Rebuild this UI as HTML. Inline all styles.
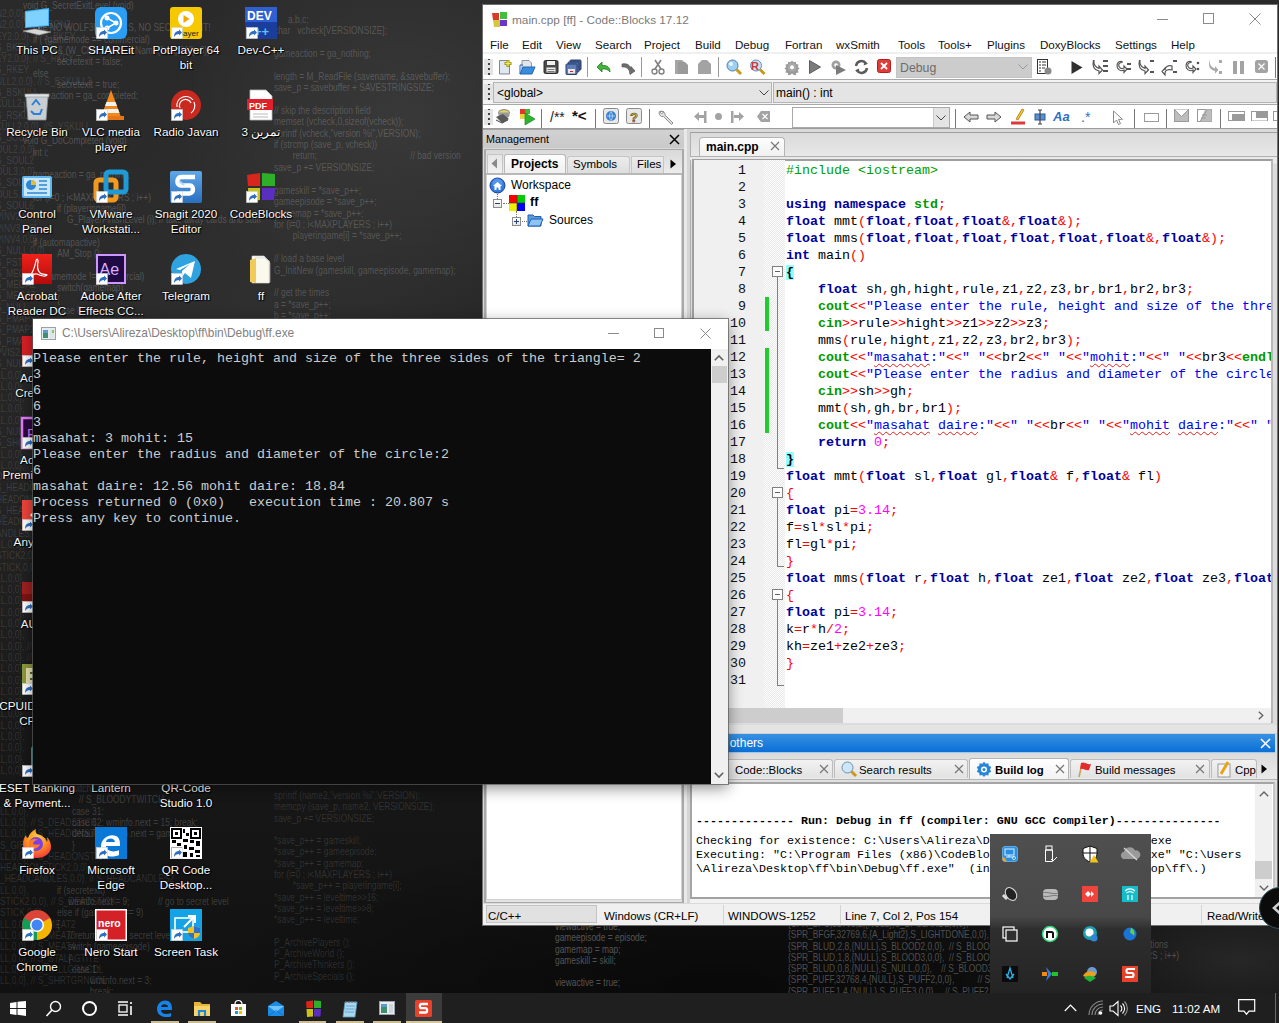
<!DOCTYPE html>
<html><head><meta charset="utf-8">
<style>
*{margin:0;padding:0;box-sizing:border-box}
html,body{width:1279px;height:1023px;overflow:hidden}
body{position:relative;background:#1c1c1c;font-family:"Liberation Sans",sans-serif;font-size:12px}
.a{position:absolute;white-space:nowrap}
svg{overflow:visible}
pre.a{white-space:pre}
#desk{left:0;top:0;width:1279px;height:993px;overflow:hidden;background:radial-gradient(ellipse 190px 80px at 1240px 960px,rgba(42,42,42,.85) 0%,rgba(42,42,42,0) 100%),radial-gradient(ellipse 520px 160px at 720px 990px,rgba(0,0,0,.5) 0%,rgba(0,0,0,0) 100%),radial-gradient(ellipse 230px 200px at 400px 120px,rgba(62,62,62,.75) 0%,rgba(62,62,62,0) 100%),radial-gradient(ellipse 260px 240px at 260px 300px,rgba(52,52,52,.6) 0%,rgba(52,52,52,0) 100%),linear-gradient(180deg,#2a2a2a 0%,#282828 30%,#222 55%,#181818 75%,#111 100%)}
#cb{left:483px;top:5px;width:794px;height:920px;background:#fff;overflow:hidden;box-shadow:0 0 0 1px #6f6f6f}
.wt{font-family:"Liberation Sans",sans-serif;transform:scaleX(.8);transform-origin:0 0}
.dl{width:90px;text-align:center;font-size:11.7px;line-height:15px;color:#fff;text-shadow:0 0 2px #000,1px 1px 1px #000,0 0 1px #000}
.tt{font-size:11.8px;line-height:16px;color:#7a7a7a}
.mn{top:32px;font-size:11.6px;line-height:15px;color:#111}
.grip{width:9px;background:#e3e3e3 linear-gradient(#555,#555) 3px 4px/2px 2px repeat-y;background-image:repeating-linear-gradient(180deg,transparent 0 2px,#444 2px 4px,transparent 4px 5px);background-size:2px 100%;background-position:4px 0;background-repeat:no-repeat;background-clip:content-box;padding:3px 0}
.hatch{background:repeating-conic-gradient(#e9e9e9 0 25%,#fdfdfd 0 50%) 0 0/2px 2px}
.ln{font-family:"Liberation Mono",monospace;font-size:13.33px;line-height:17px;text-align:right;color:#111}
.code{font-family:"Liberation Mono",monospace;font-size:13.33px;line-height:17px;color:#000}
.kw{color:#0000a0;font-weight:bold}.k2{color:#009a00;font-weight:bold}.op{color:#f00}.st{color:#0000f0}.nu{color:#f0f}.pp{color:#00a000}.br{background:#8fffff;color:#000;font-weight:bold}
.code u{text-decoration:underline wavy #e02020;text-decoration-thickness:.7px;text-underline-offset:2px}
.fb{width:11px;height:11px;border:1px solid #808080;background:#fff linear-gradient(#606060,#606060) center/5px 1px no-repeat}
.tab2{top:756px;height:19px;background:linear-gradient(#f2f2f2,#e2e2e2);border:1px solid #bdbdbd;border-bottom:none;border-radius:3px 3px 0 0}
.t2t{top:757px;font-size:11.4px;line-height:16px;color:#000}
.log{font-family:"Liberation Mono",monospace;font-size:11.67px;line-height:14px;color:#000}
.sb{top:904px;font-size:11.5px;line-height:15px;color:#000}
.cn{font-family:"Liberation Mono",monospace;font-size:13.33px;line-height:16px;color:#cccccc}
#con{left:33px;top:319px;width:695px;height:465px;background:#0c0c0c;overflow:hidden;box-shadow:0 0 0 1px rgba(90,90,90,.7),0 4px 14px rgba(0,0,0,.45)}
#taskbar{left:0;top:993px;width:1279px;height:30px;background:#1f1f1f}
#tray{left:990px;top:834px;width:161px;height:159px;background:linear-gradient(180deg,#4f4f4f 0%,#484848 52%,#2e2e2e 60%,#242424 100%)}
</style></head><body>
<div id="desk" class="a"></div>
<div class="a wt" style="left:23px;top:-1.3px;line-height:12px;color:rgba(255,255,255,0.2);font-size:10.5px">void G_SecretExitLevel (void)</div>
<div class="a wt" style="left:23px;top:10.0px;line-height:12px;color:rgba(255,255,255,0.2);font-size:10.5px">{</div>
<div class="a wt" style="left:33px;top:21.3px;line-height:12px;color:rgba(255,255,255,0.2);font-size:10.5px">// IF NO WOLF3D LEVELS, NO SECRET EXIT!</div>
<div class="a wt" style="left:33px;top:32.6px;line-height:12px;color:rgba(255,255,255,0.2);font-size:10.5px">if ( (gamemode == commercial)</div>
<div class="a wt" style="left:52px;top:43.9px;line-height:12px;color:rgba(255,255,255,0.2);font-size:10.5px">&amp;&amp; (W_CheckNumForName(&quot;map31&quot;)&lt;0))</div>
<div class="a wt" style="left:57px;top:55.2px;line-height:12px;color:rgba(255,255,255,0.2);font-size:10.5px">secretexit = false;</div>
<div class="a wt" style="left:33px;top:66.5px;line-height:12px;color:rgba(255,255,255,0.2);font-size:10.5px">else</div>
<div class="a wt" style="left:57px;top:77.8px;line-height:12px;color:rgba(255,255,255,0.2);font-size:10.5px">secretexit = true;</div>
<div class="a wt" style="left:30px;top:89.1px;line-height:12px;color:rgba(255,255,255,0.2);font-size:10.5px">gameaction = ga_completed;</div>
<div class="a wt" style="left:23px;top:100.4px;line-height:12px;color:rgba(255,255,255,0.2);font-size:10.5px">}</div>
<div class="a wt" style="left:23px;top:134.3px;line-height:12px;color:rgba(255,255,255,0.2);font-size:10.5px">void G_DoCompleted (void)</div>
<div class="a wt" style="left:33px;top:145.6px;line-height:12px;color:rgba(255,255,255,0.2);font-size:10.5px">int             i;</div>
<div class="a wt" style="left:33px;top:168.2px;line-height:12px;color:rgba(255,255,255,0.2);font-size:10.5px">gameaction = ga_nothing;</div>
<div class="a wt" style="left:33px;top:190.8px;line-height:12px;color:rgba(255,255,255,0.2);font-size:10.5px">for (i=0 ; i&lt;MAXPLAYERS ; i++)</div>
<div class="a wt" style="left:57px;top:202.1px;line-height:12px;color:rgba(255,255,255,0.2);font-size:10.5px">if (playeringame[i])</div>
<div class="a wt" style="left:67px;top:213.4px;line-height:12px;color:rgba(255,255,255,0.2);font-size:10.5px">G_PlayerFinishLevel (i);        // take away cards and stuff</div>
<div class="a wt" style="left:33px;top:236.0px;line-height:12px;color:rgba(255,255,255,0.2);font-size:10.5px">if (automapactive)</div>
<div class="a wt" style="left:57px;top:247.3px;line-height:12px;color:rgba(255,255,255,0.2);font-size:10.5px">AM_Stop ();</div>
<div class="a wt" style="left:33px;top:269.9px;line-height:12px;color:rgba(255,255,255,0.2);font-size:10.5px">if ( gamemode != commercial)</div>
<div class="a wt" style="left:57px;top:281.2px;line-height:12px;color:rgba(255,255,255,0.2);font-size:10.5px">switch(gamemap)</div>
<div class="a wt" style="left:57px;top:292.5px;line-height:12px;color:rgba(255,255,255,0.2);font-size:10.5px">{</div>
<div class="a wt" style="left:57px;top:303.8px;line-height:12px;color:rgba(255,255,255,0.2);font-size:10.5px">case 8:</div>
<pre class="a wt" style="left:-4px;top:8px;line-height:11.3px;color:rgba(255,255,255,0.13);font-size:10.5px">N2,0,0},
N2,0,0},  // S_BON2
EY2,0,0},  // S_BKEY
S_BKEY
EY2,0,0}, // S_RKEY
S_RKEY
ULL2,0,0}, // S_BSKULL2
S_BSKULL
KULL2,0,0},
S_RSKULL
KULL2,0,0}, //S_YSKULL
S_SOUL
OUL2,0,0},
S_SOUL2
OUL3,0,0},
S_SOUL4
OUL5,0,0},
S_SOUL6
PINV2,0,0},
PINV3,0,0},
PINV4,0,0},
S_NULL,0,0},
S_PSTR
S_MEGA
S_MEGA2
S_MEGA3
S_NULL
S_PMAP
S_PMAP2
S_PMAP3
PVIS2,0,0},
S_NULL,0,0},
LL,0,0},
LL,0,0},
LL,0,0},
LL,0,0},
LL,0,0},
S_NULL,0,0},
S_SHOT
LL,0,0},
LL,0,0},
OOD,0,0},
S_HEADONSTICK
HEADONSTICK
S_HEADCANDLES
HEADCANDLES2,0,0},
ANDLES,0,0},
LL,0,0},
STICK2,0,0},
STICK,0,0},
LL,0,0},
LL,0,0},
LL,0,0},
LL,0,0},
LL,0,0},
LL,0,0},
LL,0,0}, // S_TALLGRNCOL
LL,0,0}, // S_SHRTGRNCOL
LL,0,0},
LL,0,0},
LL,0,0},
LL,0,0},
LL,0,0},
LL,0,0},
LL,0,0},
LL,0,0},
LL,0,0},
LL,0,0},</pre>
<pre class="a wt" style="left:274px;top:13.6px;line-height:11.4px;color:rgba(255,255,255,0.19);font-size:10.5px">      a,b,c;
char   vcheck[VERSIONSIZE];

gameaction = ga_nothing;

length = M_ReadFile (savename, &amp;savebuffer);
save_p = savebuffer + SAVESTRINGSIZE;

// skip the description field
memset (vcheck,0,sizeof(vcheck));
sprintf (vcheck,&quot;version %i&quot;,VERSION);
if (strcmp (save_p, vcheck))
        return;                                        // bad version
save_p += VERSIONSIZE;

gameskill = *save_p++;
gameepisode = *save_p++;
gamemap = *save_p++;
for (i=0 ; i&lt;MAXPLAYERS ; i++)
        playeringame[i] = *save_p++;

// load a base level
G_InitNew (gameskill, gameepisode, gamemap);

// get the times
a = *save_p++;
b = *save_p++;</pre>
<div class="a wt" style="left:72px;top:782.0px;line-height:12px;color:rgba(255,255,255,0.18);font-size:10.5px">witch</div>
<div class="a wt" style="left:79px;top:793.3px;line-height:12px;color:rgba(255,255,255,0.18);font-size:10.5px">// S_BLOODYTWITCH</div>
<div class="a wt" style="left:72px;top:804.6px;line-height:12px;color:rgba(255,255,255,0.18);font-size:10.5px">case 31:</div>
<div class="a wt" style="left:72px;top:815.9px;line-height:12px;color:rgba(255,255,255,0.18);font-size:10.5px">case 32: wminfo.next = 15; break;</div>
<div class="a wt" style="left:72px;top:827.2px;line-height:12px;color:rgba(255,255,255,0.18);font-size:10.5px">default: wminfo.next = gamemap;</div>
<div class="a wt" style="left:72px;top:838.5px;line-height:12px;color:rgba(255,255,255,0.18);font-size:10.5px">}</div>
<div class="a wt" style="left:57px;top:883.7px;line-height:12px;color:rgba(255,255,255,0.18);font-size:10.5px">if (secretexit)</div>
<div class="a wt" style="left:68px;top:895.0px;line-height:12px;color:rgba(255,255,255,0.18);font-size:10.5px">wminfo.next = 9;</div>
<div class="a wt" style="left:158px;top:895.0px;line-height:12px;color:rgba(255,255,255,0.18);font-size:10.5px">// go to secret level</div>
<div class="a wt" style="left:57px;top:906.3px;line-height:12px;color:rgba(255,255,255,0.18);font-size:10.5px">else if (gamemap == 9)</div>
<div class="a wt" style="left:57px;top:917.6px;line-height:12px;color:rgba(255,255,255,0.18);font-size:10.5px">{</div>
<div class="a wt" style="left:68px;top:928.9px;line-height:12px;color:rgba(255,255,255,0.18);font-size:10.5px">// returning from secret level</div>
<div class="a wt" style="left:68px;top:940.2px;line-height:12px;color:rgba(255,255,255,0.18);font-size:10.5px">switch (gameepisode)</div>
<div class="a wt" style="left:68px;top:951.5px;line-height:12px;color:rgba(255,255,255,0.18);font-size:10.5px">{</div>
<div class="a wt" style="left:72px;top:962.8px;line-height:12px;color:rgba(255,255,255,0.18);font-size:10.5px">case 1:</div>
<div class="a wt" style="left:90px;top:974.1px;line-height:12px;color:rgba(255,255,255,0.18);font-size:10.5px">wminfo.next = 3;</div>
<div class="a wt" style="left:90px;top:985.4px;line-height:12px;color:rgba(255,255,255,0.18);font-size:10.5px">break;</div>
<div class="a wt" style="left:0px;top:804.6px;line-height:12px;color:rgba(255,255,255,0.12);font-size:10.5px">LL,0,0},</div>
<div class="a wt" style="left:0px;top:815.9px;line-height:12px;color:rgba(255,255,255,0.12);font-size:10.5px">LL,0,0},    // S_DEADSTICK</div>
<div class="a wt" style="left:0px;top:827.2px;line-height:12px;color:rgba(255,255,255,0.12);font-size:10.5px">LL,0,0},    // S_HEADONSTICK</div>
<div class="a wt" style="left:0px;top:838.5px;line-height:12px;color:rgba(255,255,255,0.12);font-size:10.5px">S_GIBS</div>
<div class="a wt" style="left:0px;top:849.8px;line-height:12px;color:rgba(255,255,255,0.12);font-size:10.5px">LL,0,0},     // S_HEADONSTICK</div>
<div class="a wt" style="left:0px;top:861.1px;line-height:12px;color:rgba(255,255,255,0.12);font-size:10.5px">HEADSONSTICK2,0,0},</div>
<div class="a wt" style="left:0px;top:872.4px;line-height:12px;color:rgba(255,255,255,0.12);font-size:10.5px">_HEADCANDLES,0,0},      // S_HEADCANDLES2</div>
<div class="a wt" style="left:0px;top:883.7px;line-height:12px;color:rgba(255,255,255,0.12);font-size:10.5px">LL,0,0},</div>
<div class="a wt" style="left:0px;top:895.0px;line-height:12px;color:rgba(255,255,255,0.12);font-size:10.5px">STICK2,0,0},  // S_DEADSTICK</div>
<div class="a wt" style="left:0px;top:906.3px;line-height:12px;color:rgba(255,255,255,0.12);font-size:10.5px">STICK,0,0},</div>
<div class="a wt" style="left:0px;top:917.6px;line-height:12px;color:rgba(255,255,255,0.12);font-size:10.5px">LL,0,0},   // S_MEAT2</div>
<div class="a wt" style="left:0px;top:928.9px;line-height:12px;color:rgba(255,255,255,0.12);font-size:10.5px">LL,0,0},   // S_MEAT3</div>
<div class="a wt" style="left:0px;top:940.2px;line-height:12px;color:rgba(255,255,255,0.12);font-size:10.5px">LL,0,0},   // S_MEAT4</div>
<div class="a wt" style="left:0px;top:951.5px;line-height:12px;color:rgba(255,255,255,0.12);font-size:10.5px">LL,0,0},   // S_STALAGTITE</div>
<div class="a wt" style="left:0px;top:962.8px;line-height:12px;color:rgba(255,255,255,0.12);font-size:10.5px">LL,0,0},   // S_TALLGRNCOL</div>
<div class="a wt" style="left:0px;top:974.1px;line-height:12px;color:rgba(255,255,255,0.12);font-size:10.5px">LL,0,0},   // S_SHRTGRNCOL</div>
<pre class="a wt" style="left:274px;top:790px;line-height:11.3px;color:rgba(255,255,255,0.13);font-size:10.5px">sprintf (name2,&quot;version %i&quot;,VERSION);
memcpy (save_p, name2, VERSIONSIZE);
save_p += VERSIONSIZE;

*save_p++ = gameskill;
*save_p++ = gameepisode;
*save_p++ = gamemap;
for (i=0 ; i&lt;MAXPLAYERS ; i++)
        *save_p++ = playeringame[i];
*save_p++ = leveltime&gt;&gt;16;
*save_p++ = leveltime&gt;&gt;8;
*save_p++ = leveltime;

P_ArchivePlayers ();
P_ArchiveWorld ();
P_ArchiveThinkers ();
P_ArchiveSpecials ();</pre>
<pre class="a wt" style="left:555px;top:921px;line-height:11.3px;color:rgba(255,255,255,0.3);font-size:10.5px">viewactive = true;
gameepisode = episode;
gamemap = map;
gameskill = skill;

viewactive = true;</pre>
<pre class="a wt" style="left:788px;top:918px;line-height:11.3px;color:rgba(255,255,255,0.28);font-size:10.5px">{SPR_BFG,32768,2,{NULL},S_BFGLAND2,0,0},
{SPR_BFGF,32769,6,{A_Light2},S_LIGHTDONE,0,0},
{SPR_BLUD,2,8,{NULL},S_BLOOD2,0,0},  // S_BLOOD1
{SPR_BLUD,1,8,{NULL},S_BLOOD3,0,0},  // S_BLOOD2
{SPR_BLUD,0,8,{NULL},S_NULL,0,0},    // S_BLOOD3
{SPR_PUFF,32768,4,{NULL},S_PUFF2,0,0},          // S_PUFF1
{SPR_PUFF,1,4,{NULL},S_PUFF3,0,0},    // S_PUFF2</pre>
<pre class="a wt" style="left:1146px;top:939px;line-height:11.3px;color:rgba(255,255,255,0.22);font-size:10.5px">ctions
RS ; i++)


</pre>
<svg class="a" style="left:21px;top:7px" width="32" height="32" viewBox="0 0 32 32"><path d="M4 4l24-3v18L4 21z" fill="#3fb3f5"/><path d="M5 5l22-2.7v15.7L5 20z" fill="#7fd2ff"/><path d="M2 24l12-2 16 3-12 3z" fill="#d8d8d8" stroke="#9a9a9a" stroke-width=".6"/><path d="M18 20v2" stroke="#888" stroke-width="1.5"/></svg>
<div class="a dl" style="left:-8px;top:42px">This PC</div>
<svg class="a" style="left:95px;top:7px" width="32" height="32" viewBox="0 0 32 32"><rect x="0" y="0" width="32" height="32" rx="6" fill="#2a9df4"/><circle cx="16" cy="16" r="10" fill="none" stroke="#fff" stroke-width="2.2"/><circle cx="12" cy="11" r="2.5" fill="#fff"/><circle cx="21" cy="16" r="2.5" fill="#fff"/><circle cx="12" cy="21" r="2.5" fill="#fff"/><path d="M12 11l9 5-9 5" fill="none" stroke="#fff" stroke-width="1.5"/></svg>
<svg class="a" style="left:96px;top:27px" width="12" height="12"><rect x="0.5" y="0.5" width="11" height="11" fill="#fff" stroke="#d0d0d0" stroke-width=".6"/><path d="M3 10c0-4 2-6 5-6V2.5l3 3-3 3V7c-2 0-4 1-5 3z" fill="#2f6fc0"/></svg>
<div class="a dl" style="left:66px;top:42px">SHAREit</div>
<svg class="a" style="left:170px;top:7px" width="32" height="32" viewBox="0 0 32 32"><rect x="0" y="0" width="32" height="32" rx="3" fill="#f6c800"/><circle cx="16" cy="12" r="8" fill="#fff"/><path d="M13.5 8v8l6-4z" fill="#f0a800"/><text x="6" y="29" font-family="Liberation Sans" font-size="8" fill="#222">Player</text></svg>
<svg class="a" style="left:171px;top:27px" width="12" height="12"><rect x="0.5" y="0.5" width="11" height="11" fill="#fff" stroke="#d0d0d0" stroke-width=".6"/><path d="M3 10c0-4 2-6 5-6V2.5l3 3-3 3V7c-2 0-4 1-5 3z" fill="#2f6fc0"/></svg>
<div class="a dl" style="left:141px;top:42px">PotPlayer 64</div>
<div class="a dl" style="left:141px;top:57px">bit</div>
<svg class="a" style="left:245px;top:7px" width="32" height="32" viewBox="0 0 32 32"><rect x="0" y="0" width="32" height="32" fill="#1b3d9c"/><rect x="0" y="0" width="32" height="15" fill="#2f5fd0"/><text x="2" y="13" font-family="Liberation Sans" font-weight="bold" font-size="12" fill="#fff">DEV</text><text x="9" y="29" font-family="Liberation Sans" font-weight="bold" font-size="13" fill="#5fc0ff">++</text></svg>
<svg class="a" style="left:246px;top:27px" width="12" height="12"><rect x="0.5" y="0.5" width="11" height="11" fill="#fff" stroke="#d0d0d0" stroke-width=".6"/><path d="M3 10c0-4 2-6 5-6V2.5l3 3-3 3V7c-2 0-4 1-5 3z" fill="#2f6fc0"/></svg>
<div class="a dl" style="left:216px;top:42px">Dev-C++</div>
<svg class="a" style="left:21px;top:89px" width="32" height="32" viewBox="0 0 32 32"><path d="M5 7h22l-2 24H7z" fill="#c9ced3" stroke="#8a9095" stroke-width=".8"/><path d="M4 5h24v3H4z" fill="#dfe3e6" stroke="#8a9095" stroke-width=".6"/><path d="M11 16l4-5 4 5M21 20l-2 5h-7M10 22l3 3" fill="none" stroke="#2f7fd6" stroke-width="2"/></svg>
<div class="a dl" style="left:-8px;top:124px">Recycle Bin</div>
<svg class="a" style="left:95px;top:89px" width="32" height="32" viewBox="0 0 32 32"><path d="M16 1l10 27H6z" fill="#f18a1b"/><path d="M11.5 13h9l1.5 4H10zM9 20h14l1.5 4H7.5z" fill="#f2f2f2"/><path d="M3 27h26v4H3z" fill="#e8751a"/></svg>
<svg class="a" style="left:96px;top:109px" width="12" height="12"><rect x="0.5" y="0.5" width="11" height="11" fill="#fff" stroke="#d0d0d0" stroke-width=".6"/><path d="M3 10c0-4 2-6 5-6V2.5l3 3-3 3V7c-2 0-4 1-5 3z" fill="#2f6fc0"/></svg>
<div class="a dl" style="left:66px;top:124px">VLC media</div>
<div class="a dl" style="left:66px;top:139px">player</div>
<svg class="a" style="left:170px;top:89px" width="32" height="32" viewBox="0 0 32 32"><circle cx="16" cy="16" r="15" fill="#c9291f"/><path d="M7 18a9 9 0 0 1 16-7M10 19a6 6 0 0 1 11-5M24 13a9 9 0 0 1-3 11" fill="none" stroke="#fff" stroke-width="1.2"/></svg>
<svg class="a" style="left:171px;top:109px" width="12" height="12"><rect x="0.5" y="0.5" width="11" height="11" fill="#fff" stroke="#d0d0d0" stroke-width=".6"/><path d="M3 10c0-4 2-6 5-6V2.5l3 3-3 3V7c-2 0-4 1-5 3z" fill="#2f6fc0"/></svg>
<div class="a dl" style="left:141px;top:124px">Radio Javan</div>
<svg class="a" style="left:245px;top:89px" width="32" height="32" viewBox="0 0 32 32"><path d="M5 1h16l6 6v24H5z" fill="#fff" stroke="#bbb" stroke-width=".8"/><rect x="2" y="10" width="26" height="11" fill="#e0202a"/><text x="4" y="19.5" font-family="Liberation Sans" font-weight="bold" font-size="9" fill="#fff">PDF</text><path d="M8 25h15M8 28h15" stroke="#bbb"/></svg>
<div class="a dl" style="left:216px;top:124px">تمرین 3</div>
<svg class="a" style="left:21px;top:171px" width="32" height="32" viewBox="0 0 32 32"><rect x="1" y="5" width="30" height="22" rx="2" fill="#5fb6ef"/><rect x="3" y="7" width="26" height="18" fill="#c8e7fb"/><circle cx="10" cy="14" r="5" fill="#2f86d0"/><path d="M10 14V9a5 5 0 0 1 5 5z" fill="#f2b830"/><path d="M18 10h8M18 14h8M18 18h8M6 22h20" stroke="#2f86d0" stroke-width="1.6"/></svg>
<div class="a dl" style="left:-8px;top:206px">Control</div>
<div class="a dl" style="left:-8px;top:221px">Panel</div>
<svg class="a" style="left:95px;top:171px" width="32" height="32" viewBox="0 0 32 32"><rect x="1" y="9" width="20" height="20" rx="3" fill="none" stroke="#f39a1e" stroke-width="5"/><rect x="11" y="1" width="20" height="20" rx="3" fill="none" stroke="#1e9ad6" stroke-width="5"/></svg>
<svg class="a" style="left:96px;top:191px" width="12" height="12"><rect x="0.5" y="0.5" width="11" height="11" fill="#fff" stroke="#d0d0d0" stroke-width=".6"/><path d="M3 10c0-4 2-6 5-6V2.5l3 3-3 3V7c-2 0-4 1-5 3z" fill="#2f6fc0"/></svg>
<div class="a dl" style="left:66px;top:206px">VMware</div>
<div class="a dl" style="left:66px;top:221px">Workstati...</div>
<svg class="a" style="left:170px;top:171px" width="32" height="32" viewBox="0 0 32 32"><defs><linearGradient id="sng" x1="0" y1="0" x2="0" y2="1"><stop offset="0" stop-color="#5fa8e8"/><stop offset="1" stop-color="#2a6fc0"/></linearGradient></defs><rect x="0" y="0" width="32" height="32" rx="2" fill="url(#sng)"/><path d="M25 6H11c-4.5 0-5 8.5 0 8.5h9c4 0 4 8-.5 8H7" fill="none" stroke="#fff" stroke-width="4.5"/><path d="M9 10l5 4" stroke="#b8d8f5" stroke-width="2"/></svg>
<svg class="a" style="left:171px;top:191px" width="12" height="12"><rect x="0.5" y="0.5" width="11" height="11" fill="#fff" stroke="#d0d0d0" stroke-width=".6"/><path d="M3 10c0-4 2-6 5-6V2.5l3 3-3 3V7c-2 0-4 1-5 3z" fill="#2f6fc0"/></svg>
<div class="a dl" style="left:141px;top:206px">Snagit 2020</div>
<div class="a dl" style="left:141px;top:221px">Editor</div>
<svg class="a" style="left:245px;top:171px" width="32" height="32" viewBox="0 0 32 32"><path d="M2 4l13-2v13H3z" fill="#d8261c"/><path d="M17 2l13 1v12H17z" fill="#2fae2a"/><path d="M3 17h12v12l-11 2z" fill="#c8c21a"/><path d="M17 17h13l-1 12H17z" fill="#5a2fc0"/></svg>
<svg class="a" style="left:246px;top:191px" width="12" height="12"><rect x="0.5" y="0.5" width="11" height="11" fill="#fff" stroke="#d0d0d0" stroke-width=".6"/><path d="M3 10c0-4 2-6 5-6V2.5l3 3-3 3V7c-2 0-4 1-5 3z" fill="#2f6fc0"/></svg>
<div class="a dl" style="left:216px;top:206px">CodeBlocks</div>
<svg class="a" style="left:21px;top:253px" width="32" height="32" viewBox="0 0 32 32"><defs><linearGradient id="acg" x1="0" y1="0" x2="0" y2="1"><stop offset="0" stop-color="#f0221a"/><stop offset="1" stop-color="#b30b0b"/></linearGradient></defs><rect x="1" y="1" width="30" height="30" fill="url(#acg)"/><path d="M8 24c3-3 6-11 7-16 .5-3 2.5-2 2 1-1 5-1 8 2 11 2 2 6 1 7 2-1 2-6 1-10-1-3-1-6 2-8 3z" fill="none" stroke="#fff" stroke-width="1.2"/></svg>
<svg class="a" style="left:22px;top:273px" width="12" height="12"><rect x="0.5" y="0.5" width="11" height="11" fill="#fff" stroke="#d0d0d0" stroke-width=".6"/><path d="M3 10c0-4 2-6 5-6V2.5l3 3-3 3V7c-2 0-4 1-5 3z" fill="#2f6fc0"/></svg>
<div class="a dl" style="left:-8px;top:288px">Acrobat</div>
<div class="a dl" style="left:-8px;top:303px">Reader DC</div>
<svg class="a" style="left:95px;top:253px" width="32" height="32" viewBox="0 0 32 32"><rect x="2" y="2" width="28" height="28" fill="#1f0a44" stroke="#cf96ff" stroke-width="2"/><text x="4.5" y="22" font-family="Liberation Sans" font-size="16" fill="#dcb0ff">Ae</text></svg>
<svg class="a" style="left:96px;top:273px" width="12" height="12"><rect x="0.5" y="0.5" width="11" height="11" fill="#fff" stroke="#d0d0d0" stroke-width=".6"/><path d="M3 10c0-4 2-6 5-6V2.5l3 3-3 3V7c-2 0-4 1-5 3z" fill="#2f6fc0"/></svg>
<div class="a dl" style="left:66px;top:288px">Adobe After</div>
<div class="a dl" style="left:66px;top:303px">Effects CC...</div>
<svg class="a" style="left:170px;top:253px" width="32" height="32" viewBox="0 0 32 32"><circle cx="16" cy="16" r="15" fill="#2fa3e0"/><path d="M6 16l19-8-4 17-6-5-3 4v-6l8-7-10 6z" fill="#fff"/></svg>
<svg class="a" style="left:171px;top:273px" width="12" height="12"><rect x="0.5" y="0.5" width="11" height="11" fill="#fff" stroke="#d0d0d0" stroke-width=".6"/><path d="M3 10c0-4 2-6 5-6V2.5l3 3-3 3V7c-2 0-4 1-5 3z" fill="#2f6fc0"/></svg>
<div class="a dl" style="left:141px;top:288px">Telegram</div>
<svg class="a" style="left:245px;top:253px" width="32" height="32" viewBox="0 0 32 32"><path d="M7 3h12l5 5v22H7z" fill="#fff" stroke="#c8c8c8" stroke-width=".7"/><path d="M10 5h10l5 5v19" fill="none" stroke="#bbb" stroke-width=".6"/><path d="M5 7l6-2v25l-6-1z" fill="#f1cb5a"/><path d="M11 5l14 3v22l-14 0z" fill="#f8f3e0" opacity=".6"/></svg>
<div class="a dl" style="left:216px;top:288px">ff</div>
<svg class="a" style="left:21px;top:335px" width="32" height="32" viewBox="0 0 32 32"><rect x="1" y="1" width="30" height="30" fill="#da1f26"/><circle cx="20" cy="14" r="7" fill="none" stroke="#fff" stroke-width="2"/></svg>
<svg class="a" style="left:22px;top:355px" width="12" height="12"><rect x="0.5" y="0.5" width="11" height="11" fill="#fff" stroke="#d0d0d0" stroke-width=".6"/><path d="M3 10c0-4 2-6 5-6V2.5l3 3-3 3V7c-2 0-4 1-5 3z" fill="#2f6fc0"/></svg>
<div class="a dl" style="left:-8px;top:370px">Adobe</div>
<div class="a dl" style="left:-8px;top:385px">Creative</div>
<svg class="a" style="left:21px;top:417px" width="32" height="32" viewBox="0 0 32 32"><rect x="1" y="1" width="30" height="30" fill="#2a0a3d" stroke="#e07cf8" stroke-width="2.5"/><text x="6" y="22" font-family="Liberation Sans" font-size="14" fill="#e07cf8">Pr</text></svg>
<svg class="a" style="left:22px;top:437px" width="12" height="12"><rect x="0.5" y="0.5" width="11" height="11" fill="#fff" stroke="#d0d0d0" stroke-width=".6"/><path d="M3 10c0-4 2-6 5-6V2.5l3 3-3 3V7c-2 0-4 1-5 3z" fill="#2f6fc0"/></svg>
<div class="a dl" style="left:-8px;top:452px">Adobe</div>
<div class="a dl" style="left:-8px;top:467px">Premiere Pro</div>
<svg class="a" style="left:21px;top:499px" width="32" height="32" viewBox="0 0 32 32"><rect x="1" y="1" width="30" height="30" fill="#ef443b"/><path d="M16 9l7 7-7 7-7-7z" fill="#fff"/></svg>
<svg class="a" style="left:22px;top:519px" width="12" height="12"><rect x="0.5" y="0.5" width="11" height="11" fill="#fff" stroke="#d0d0d0" stroke-width=".6"/><path d="M3 10c0-4 2-6 5-6V2.5l3 3-3 3V7c-2 0-4 1-5 3z" fill="#2f6fc0"/></svg>
<div class="a dl" style="left:-8px;top:534px">AnyDesk</div>
<svg class="a" style="left:21px;top:581px" width="32" height="32" viewBox="0 0 32 32"><rect x="1" y="1" width="30" height="30" fill="#7d1414"/><rect x="1" y="1" width="30" height="12" fill="#a02020"/><circle cx="20" cy="12" r="1.5" fill="#fff"/></svg>
<svg class="a" style="left:22px;top:601px" width="12" height="12"><rect x="0.5" y="0.5" width="11" height="11" fill="#fff" stroke="#d0d0d0" stroke-width=".6"/><path d="M3 10c0-4 2-6 5-6V2.5l3 3-3 3V7c-2 0-4 1-5 3z" fill="#2f6fc0"/></svg>
<div class="a dl" style="left:-8px;top:616px">AURA</div>
<svg class="a" style="left:21px;top:663px" width="32" height="32" viewBox="0 0 32 32"><rect x="1" y="1" width="30" height="30" fill="#8d9a3a"/><rect x="5" y="5" width="22" height="22" fill="#e9e3b8"/><path d="M9 10h14M9 16h14M9 22h14" stroke="#4b6a2a" stroke-width="2"/></svg>
<svg class="a" style="left:22px;top:683px" width="12" height="12"><rect x="0.5" y="0.5" width="11" height="11" fill="#fff" stroke="#d0d0d0" stroke-width=".6"/><path d="M3 10c0-4 2-6 5-6V2.5l3 3-3 3V7c-2 0-4 1-5 3z" fill="#2f6fc0"/></svg>
<div class="a dl" style="left:-8px;top:698px">CPUID CPU-Z</div>
<div class="a dl" style="left:-8px;top:713px">CPU-Z</div>
<svg class="a" style="left:21px;top:745px" width="32" height="32" viewBox="0 0 32 32"><rect x="10" y="1" width="14" height="30" rx="3" fill="#19a3ae"/><circle cx="17" cy="9" r="5" fill="#fff"/><rect x="12" y="18" width="10" height="3" fill="#fff"/></svg>
<svg class="a" style="left:22px;top:765px" width="12" height="12"><rect x="0.5" y="0.5" width="11" height="11" fill="#fff" stroke="#d0d0d0" stroke-width=".6"/><path d="M3 10c0-4 2-6 5-6V2.5l3 3-3 3V7c-2 0-4 1-5 3z" fill="#2f6fc0"/></svg>
<div class="a dl" style="left:-8px;top:780px">ESET Banking</div>
<div class="a dl" style="left:-8px;top:795px">&amp; Payment...</div>
<div class="a dl" style="left:66px;top:780px">Lantern</div>
<div class="a dl" style="left:141px;top:780px">QR-Code</div>
<div class="a dl" style="left:141px;top:795px">Studio 1.0</div>
<svg class="a" style="left:21px;top:827px" width="32" height="32" viewBox="0 0 32 32"><defs><radialGradient id="ffg" cx=".5" cy=".3" r=".8"><stop offset="0" stop-color="#ffd23a"/><stop offset=".5" stop-color="#ff8a1f"/><stop offset="1" stop-color="#f0204a"/></radialGradient></defs><path d="M16 31C8 31 2 25 2 17c0-4 1.5-7 3-9 0 2 1 3 2 3 1-4 4-7 8-9-1 2 0 4 1 5 5 1 9 4 10 8 .5-1 .5-3 0-5 3 3 4 7 4 10 0 6-6 11-14 11z" fill="url(#ffg)"/><circle cx="15" cy="17" r="7" fill="#7b3fe4"/><path d="M8 15c2-3 6-4 9-2-3 0-5 2-5 4 2 1 5 1 7 0-1 4-6 6-10 4-1-2-1-4-1-6z" fill="#ff7a2a"/></svg>
<svg class="a" style="left:22px;top:847px" width="12" height="12"><rect x="0.5" y="0.5" width="11" height="11" fill="#fff" stroke="#d0d0d0" stroke-width=".6"/><path d="M3 10c0-4 2-6 5-6V2.5l3 3-3 3V7c-2 0-4 1-5 3z" fill="#2f6fc0"/></svg>
<div class="a dl" style="left:-8px;top:862px">Firefox</div>
<svg class="a" style="left:95px;top:827px" width="32" height="32" viewBox="0 0 32 32"><rect x="0" y="0" width="32" height="32" fill="#0a78d7"/><path d="M25 19H11c0 5 8 7 13 4v5c-6 3-17 2-18-7-1-10 9-15 15-12 4 2 4 6 4 10zM11 15h9c0-4-8-5-9 0z" fill="#fff"/></svg>
<svg class="a" style="left:96px;top:847px" width="12" height="12"><rect x="0.5" y="0.5" width="11" height="11" fill="#fff" stroke="#d0d0d0" stroke-width=".6"/><path d="M3 10c0-4 2-6 5-6V2.5l3 3-3 3V7c-2 0-4 1-5 3z" fill="#2f6fc0"/></svg>
<div class="a dl" style="left:66px;top:862px">Microsoft</div>
<div class="a dl" style="left:66px;top:877px">Edge</div>
<svg class="a" style="left:170px;top:827px" width="32" height="32" viewBox="0 0 32 32"><rect x="0" y="0" width="32" height="32" fill="#fff"/><path d="M2 2h9v9H2zM21 2h9v9h-9zM2 21h9v9H2z" fill="none" stroke="#000" stroke-width="2"/><path d="M5 5h3v3H5zM24 5h3v3h-3zM5 24h3v3H5zM13 2h2v4h-2zM16 6h3v3h-3zM13 12h5v3h-5zM20 13h4v3h-4zM26 14h4v5h-4zM14 18h3v4h-3zM19 20h5v3h-5zM13 25h4v5h-4zM20 26h3v4h-3zM25 23h5v3h-5zM26 28h4v2h-4zM2 13h4v3H2zM7 16h4v3H7z" fill="#000"/></svg>
<svg class="a" style="left:171px;top:847px" width="12" height="12"><rect x="0.5" y="0.5" width="11" height="11" fill="#fff" stroke="#d0d0d0" stroke-width=".6"/><path d="M3 10c0-4 2-6 5-6V2.5l3 3-3 3V7c-2 0-4 1-5 3z" fill="#2f6fc0"/></svg>
<div class="a dl" style="left:141px;top:862px">QR Code</div>
<div class="a dl" style="left:141px;top:877px">Desktop...</div>
<svg class="a" style="left:21px;top:909px" width="32" height="32" viewBox="0 0 32 32"><circle cx="16" cy="16" r="15" fill="#db4437"/><path d="M16 16L3 23A15 15 0 0 0 16 31z" fill="#0f9d58"/><path d="M16 16L3 23A15 15 0 0 1 3 9z" fill="#0f9d58"/><path d="M16 16h15A15 15 0 0 1 16 31z" fill="#f4b400"/><path d="M16 16L29 9A15 15 0 0 1 31 16z" fill="#f4b400"/><circle cx="16" cy="16" r="7" fill="#fff"/><circle cx="16" cy="16" r="5.5" fill="#4285f4"/></svg>
<svg class="a" style="left:22px;top:929px" width="12" height="12"><rect x="0.5" y="0.5" width="11" height="11" fill="#fff" stroke="#d0d0d0" stroke-width=".6"/><path d="M3 10c0-4 2-6 5-6V2.5l3 3-3 3V7c-2 0-4 1-5 3z" fill="#2f6fc0"/></svg>
<div class="a dl" style="left:-8px;top:944px">Google</div>
<div class="a dl" style="left:-8px;top:959px">Chrome</div>
<svg class="a" style="left:95px;top:909px" width="32" height="32" viewBox="0 0 32 32"><rect x="0" y="0" width="32" height="32" fill="#fff"/><rect x="1.5" y="1.5" width="29" height="29" fill="#d42128"/><text x="3" y="18" font-family="Liberation Sans" font-weight="bold" font-size="10.5" fill="#fff">nero</text></svg>
<svg class="a" style="left:96px;top:929px" width="12" height="12"><rect x="0.5" y="0.5" width="11" height="11" fill="#fff" stroke="#d0d0d0" stroke-width=".6"/><path d="M3 10c0-4 2-6 5-6V2.5l3 3-3 3V7c-2 0-4 1-5 3z" fill="#2f6fc0"/></svg>
<div class="a dl" style="left:66px;top:944px">Nero Start</div>
<svg class="a" style="left:170px;top:909px" width="32" height="32" viewBox="0 0 32 32"><rect x="0" y="0" width="32" height="32" fill="#13a3e6"/><rect x="5" y="9" width="18" height="14" fill="none" stroke="#fff" stroke-width="1.6"/><path d="M14 18l10-10M18 7h7v7" fill="none" stroke="#fff" stroke-width="2"/><path d="M24 17l6 2v5c0 3-3 5-6 6-3-1-6-3-6-6v-5z" fill="#f6c21a"/><path d="M24 17l6 2v5H24zM18 24h6v6c-3-1-6-3-6-6z" fill="#2f6fd0"/></svg>
<svg class="a" style="left:171px;top:929px" width="12" height="12"><rect x="0.5" y="0.5" width="11" height="11" fill="#fff" stroke="#d0d0d0" stroke-width=".6"/><path d="M3 10c0-4 2-6 5-6V2.5l3 3-3 3V7c-2 0-4 1-5 3z" fill="#2f6fc0"/></svg>
<div class="a dl" style="left:141px;top:944px">Screen Task</div>
<div id="cb" class="a">
 <!-- title bar -->
 <svg class="a" style="left:8px;top:6px" width="17" height="17" viewBox="0 0 17 17"><path d="M1 2h7v7H2z" fill="#d93a2b"/><path d="M9 1h7v7H9z" fill="#3fbf3a"/><path d="M2 9h7v7H3z" fill="#d6c83a"/><path d="M9 9h7v6H9z" fill="#6a35c8"/></svg>
 <div class="a tt" style="left:29px;top:7px">main.cpp [ff] - Code::Blocks 17.12</div>
 <div class="a" style="left:674px;top:14px;width:11px;height:1px;background:#8a8a8a"></div>
 <div class="a" style="left:720px;top:8px;width:11px;height:11px;border:1px solid #8a8a8a"></div>
 <svg class="a" style="left:766px;top:8px" width="12" height="12"><path d="M0.5 0.5L11.5 11.5M11.5 0.5L0.5 11.5" stroke="#8a8a8a" stroke-width="1"/></svg>
 <!-- menu -->
 <div class="a mn" style="left:7px">File</div><div class="a mn" style="left:39px">Edit</div><div class="a mn" style="left:73px">View</div><div class="a mn" style="left:112px">Search</div><div class="a mn" style="left:161px">Project</div><div class="a mn" style="left:212px">Build</div><div class="a mn" style="left:252px">Debug</div><div class="a mn" style="left:302px">Fortran</div><div class="a mn" style="left:353px">wxSmith</div><div class="a mn" style="left:415px">Tools</div><div class="a mn" style="left:455px">Tools+</div><div class="a mn" style="left:504px">Plugins</div><div class="a mn" style="left:557px">DoxyBlocks</div><div class="a mn" style="left:632px">Settings</div><div class="a mn" style="left:688px">Help</div>
 <div class="a" style="left:0;top:47px;width:794px;height:2px;background:#f0f0f0"></div>
 <!-- toolbar rows -->
 <div class="a" style="left:0;top:74px;width:794px;height:1px;background:#a9a9a9"></div>
 <div class="a" style="left:0;top:99px;width:794px;height:1px;background:#a9a9a9"></div>
 <div class="a" style="left:0;top:75px;width:794px;height:24px;background:#f3f3f3"></div>
 <div class="a grip" style="left:1px;top:51px;height:22px"></div>
 <div class="a grip" style="left:1px;top:76px;height:22px"></div>
 <div class="a grip" style="left:1px;top:101px;height:22px"></div>
 <!-- toolbar 1 icons (local y top 54) -->
 <svg class="a" style="left:14px;top:54px" width="16" height="16"><path d="M2.5 1.5h7l3 3v10.5h-10z" fill="#dfe8f2" stroke="#7d8794"/><path d="M11 1v7M7.5 4.5h7" stroke="#9a8c00" stroke-width="3"/><path d="M11 1.8v5.4M8.3 4.5h5.4" stroke="#f2ea60" stroke-width="1.3"/></svg>
 <svg class="a" style="left:36px;top:54px" width="17" height="16"><path d="M3 1.5h7l2.5 2.5v6h-9.5z" fill="#e2e6ea" stroke="#8e97a2"/><path d="M1 15l3-7h12l-3 7z" fill="#3a8ddc" stroke="#2266b3"/><path d="M1 15V6h3" fill="none" stroke="#2266b3"/></svg>
 <svg class="a" style="left:60px;top:54px" width="16" height="16"><rect x="1" y="1.5" width="14" height="13" rx="1.5" fill="#4a4a4a" stroke="#2a2a2a"/><rect x="4" y="2" width="8" height="4" fill="#f0f0f0"/><rect x="3.5" y="8.5" width="9" height="5" fill="#f0f0f0"/><path d="M4.5 10.5h7M4.5 12.5h7" stroke="#777"/></svg>
 <svg class="a" style="left:82px;top:54px" width="17" height="16"><rect x="5" y="1" width="11" height="10" rx="1" fill="#3f5d95" stroke="#2d3f6a"/><rect x="3" y="3" width="11" height="10" rx="1" fill="#4f6da8" stroke="#2d3f6a"/><rect x="1" y="5" width="11" height="10.5" rx="1" fill="#5c7cba" stroke="#2d3f6a"/><rect x="3" y="10" width="7" height="4.5" fill="#e8e8e8"/><path d="M5 12.5h3" stroke="#d22"/></svg>
 <div class="a" style="left:104px;top:52px;width:1px;height:20px;background:#9a9a9a"></div>
 <svg class="a" style="left:113px;top:54px" width="16" height="16"><path d="M14 13c0-5-3-7-8-6.5V3L1 8l5 5V10c4-.5 6 .5 8 3z" fill="#3fb53a" stroke="#1f7c1c" stroke-width=".8"/></svg>
 <svg class="a" style="left:137px;top:54px" width="16" height="16"><path d="M2 5c5-1 8 1 9 5V7.5l4 4.5-5 3.5-.5-3c-1-3-3-5-7.5-4.5z" fill="#6e6e6e" stroke="#555" stroke-width=".7"/></svg>
 <div class="a" style="left:158px;top:52px;width:1px;height:20px;background:#9a9a9a"></div>
 <svg class="a" style="left:168px;top:54px" width="14" height="16"><path d="M4 1l6 9M10 1L4 10" stroke="#808080" stroke-width="1.6"/><circle cx="3.5" cy="12.5" r="2.5" fill="none" stroke="#808080" stroke-width="1.4"/><circle cx="10.5" cy="12.5" r="2.5" fill="none" stroke="#808080" stroke-width="1.4"/></svg>
 <svg class="a" style="left:191px;top:54px" width="15" height="16"><path d="M1 1h7l3 3v11H1z" fill="#a5a5a5"/><path d="M4 3h7l3 3v9H4z" fill="#9a9a9a"/></svg>
 <svg class="a" style="left:214px;top:54px" width="15" height="16"><path d="M1 15V5l4-4h5l4 4v10z" fill="#a3a3a3"/></svg>
 <div class="a" style="left:235px;top:52px;width:1px;height:20px;background:#9a9a9a"></div>
 <svg class="a" style="left:243px;top:54px" width="17" height="17"><circle cx="6.5" cy="6.5" r="5.5" fill="#9fd0f2" stroke="#4d7ea8"/><circle cx="5" cy="5" r="2" fill="#e8f6ff"/><path d="M10.5 10.5l4.5 4.5" stroke="#c79a1a" stroke-width="3"/></svg>
 <svg class="a" style="left:266px;top:54px" width="17" height="17"><circle cx="7" cy="6.5" r="5.5" fill="#c6e2f5" stroke="#6a8fb0"/><text x="2" y="11" font-family="Liberation Sans" font-weight="bold" font-size="11" fill="#d03838">R</text><path d="M11 10.5l4.5 4.5" stroke="#c79a1a" stroke-width="3"/></svg>
 <svg class="a" style="left:301px;top:54px" width="16" height="16"><path d="M8 1.5l1.5 1.8 2.3-.6.4 2.3 2.3.6-.6 2.3 1.6 1.6-1.6 1.6.6 2.3-2.3.6-.4 2.3-2.3-.6L8 14.5" fill="#9b9b9b"/><path d="M8 1.5L6.5 3.3l-2.3-.6-.4 2.3-2.3.6.6 2.3L.5 9.5l1.6 1.6-.6 2.3 2.3.6.4 2.3 2.3-.6L8 14.5" fill="#9b9b9b"/><circle cx="8" cy="8.3" r="4.3" fill="#a8a8a8"/><circle cx="8" cy="8.3" r="2" fill="#fff"/></svg>
 <svg class="a" style="left:325px;top:54px" width="14" height="16"><path d="M1.5 1.5l11 6.5-11 6.5z" fill="#7b7b7b" stroke="#5e5e5e"/></svg>
 <svg class="a" style="left:347px;top:54px" width="17" height="16"><circle cx="6" cy="6" r="4.5" fill="#a0a0a0"/><circle cx="6" cy="6" r="1.8" fill="#fff"/><path d="M6 6l10 5-10 5z" fill="#7b7b7b"/></svg>
 <svg class="a" style="left:370px;top:54px" width="17" height="16"><path d="M3 7a5.5 5.5 0 0 1 10-2.5M14 9a5.5 5.5 0 0 1-10 2.5" fill="none" stroke="#5b5b5b" stroke-width="2.4"/><path d="M11 2l4 2.8-4.2 1.6z M6 14l-4-2.8 4.2-1.6z" fill="#5b5b5b"/></svg>
 <svg class="a" style="left:394px;top:54px" width="14" height="15"><rect x=".5" y=".5" width="13" height="13" rx="2" fill="#e23b3b" stroke="#b81d1d"/><path d="M4 4l6 6M10 4l-6 6" stroke="#fff" stroke-width="1.8"/></svg>
 <div class="a" style="left:413px;top:52px;width:136px;height:21px;background:#cccccc;border:1px solid #c4c4c4"></div>
 <div class="a" style="left:417px;top:55px;font-size:12.3px;color:#6d6d6d;line-height:17px">Debug</div>
 <svg class="a" style="left:535px;top:59px" width="10" height="6"><path d="M.5.5l4.5 4.5 4.5-4.5" fill="none" stroke="#9a9a9a"/></svg>
 <svg class="a" style="left:553px;top:54px" width="16" height="16"><rect x="1.5" y=".5" width="10" height="14" fill="#fff" stroke="#333"/><path d="M3 3h2M6 3h4M3 6h2M6 6h4M3 9h2M6 9h3M3 12h2" stroke="#333"/><circle cx="12" cy="12" r="3.5" fill="#8a8a8a"/></svg>
 <svg class="a" style="left:587px;top:55px" width="14" height="15"><path d="M1.5 1l11 6.5-11 6.5z" fill="#2f2f2f"/></svg>
 <svg class="a" style="left:609px;top:54px" width="17" height="16"><path d="M2 1.5c-1 4 2 7 5 8V7l3.5 4L7 14.5V12c-5-1-7-5-5.5-10.5z" fill="none" stroke="#555" stroke-width="1.2"/><path d="M11 2h5M11 7h5M11 12h5" stroke="#555" stroke-width="2"/></svg>
 <svg class="a" style="left:632px;top:54px" width="17" height="16"><path d="M7 2.5C3 2 1 5 2.5 9 4 12 7 12 9 11V13.5l3-3.5-3-3v2c-2 1-4 .5-5-1.5-1-2 .5-4 3-4z" fill="none" stroke="#555" stroke-width="1.2"/><path d="M12 5h4M12 10h4" stroke="#555" stroke-width="2"/></svg>
 <svg class="a" style="left:655px;top:54px" width="17" height="16"><path d="M2 1.5c-1 4 2 7 5 8V7l3.5 4L7 14.5V12c-5-1-7-5-5.5-10.5z" fill="none" stroke="#555" stroke-width="1.2"/><path d="M12 2h4M12 13h4" stroke="#555" stroke-width="2"/></svg>
 <svg class="a" style="left:678px;top:54px" width="17" height="16"><path d="M11 7c-4-1-7 1-7 4v-2l-3 3.5 3 3.5v-2c0-3 3-4 7-3z" fill="none" stroke="#555" stroke-width="1.2"/><path d="M12 2h4M12 13h4" stroke="#555" stroke-width="2"/></svg>
 <svg class="a" style="left:701px;top:54px" width="17" height="16"><path d="M7 2.5C3 2 1 5 2.5 9 4 12 7 12 9 11V13.5l3-3.5-3-3v2c-2 1-4 .5-5-1.5-1-2 .5-4 3-4z" fill="none" stroke="#555" stroke-width="1.2"/><circle cx="14" cy="4" r="1.3" fill="#555"/><circle cx="14" cy="10" r="1.3" fill="#555"/></svg>
 <svg class="a" style="left:725px;top:54px" width="16" height="16"><path d="M2 1.5c-1 4 2 7 5 8V7l3.5 4L7 14.5V12c-5-1-7-5-5.5-10.5z" fill="#aaa"/><rect x="11" y="1" width="3" height="3" fill="#aaa"/><rect x="11" y="12" width="3" height="3" fill="#aaa"/></svg>
 <svg class="a" style="left:748px;top:55px" width="16" height="15"><rect x="2" y="1" width="4" height="13" fill="#a3a3a3"/><rect x="9" y="1" width="4" height="13" fill="#a3a3a3"/></svg>
 <svg class="a" style="left:771px;top:54px" width="16" height="16"><rect x="1" y="1" width="13" height="13" rx="2.5" fill="#a3a3a3"/><path d="M4.5 4.5l6 6M10.5 4.5l-6 6" stroke="#fff" stroke-width="1.2"/></svg>
 <div class="a" style="left:792px;top:52px;width:1px;height:21px;background:#777"></div>
 <!-- toolbar 2 combos -->
 <div class="a" style="left:10px;top:77px;width:279px;height:21px;background:#e4e4e4;border:1px solid #b5b5b5"></div>
 <div class="a" style="left:14px;top:80px;font-size:12px;line-height:17px;color:#000">&lt;global&gt;</div>
 <svg class="a" style="left:276px;top:85px" width="10" height="6"><path d="M.5.5l4.5 4.5 4.5-4.5" fill="none" stroke="#444"/></svg>
 <div class="a" style="left:290px;top:77px;width:504px;height:21px;background:#e4e4e4;border:1px solid #b5b5b5"></div>
 <div class="a" style="left:293px;top:80px;font-size:12px;line-height:17px;color:#000">main() : int</div>
 <!-- toolbar 3 icons (top 103) -->
 <svg class="a" style="left:12px;top:103px" width="17" height="17"><ellipse cx="9" cy="4.5" rx="5.5" ry="2.8" fill="#e4d36a" stroke="#7a7a7a"/><path d="M3.5 4.5v3c0 1.5 2.5 2.8 5.5 2.8s5.5-1.3 5.5-2.8v-3" fill="#9a9a9a"/><path d="M1 9l6 6 7-4-6-5z" fill="#5a5a5a"/><path d="M1 12l6 3 6-3" fill="none" stroke="#444"/></svg>
 <svg class="a" style="left:37px;top:103px" width="16" height="17"><rect x="0" y="1" width="5" height="5" fill="#e3352b"/><rect x="5" y="1" width="5" height="5" fill="#3cbc3a"/><rect x="0" y="6" width="5" height="5" fill="#e8d23a"/><path d="M5 5l10 6-10 6z" fill="#2bb52e" stroke="#178a1a" stroke-width=".7"/></svg>
 <div class="a" style="left:58px;top:104px;width:1px;height:20px;background:#777"></div>
 <div class="a" style="left:67px;top:103px;font-size:14px;line-height:18px;color:#222;font-family:'Liberation Sans'">/**</div>
 <div class="a" style="left:89px;top:102px;font-size:15px;line-height:18px;color:#111;font-weight:bold">*&lt;</div>
 <div class="a" style="left:112px;top:104px;width:1px;height:20px;background:#777"></div>
 <svg class="a" style="left:120px;top:103px" width="17" height="17"><rect x=".5" y=".5" width="15" height="15" rx="2" fill="#e8e8e8" stroke="#8a8a8a"/><circle cx="8" cy="8" r="5" fill="#3b7fd0"/><path d="M4 8h8M8 3.5c-2 3-2 6 0 9M8 3.5c2 3 2 6 0 9" stroke="#bfe0ff" stroke-width=".8" fill="none"/></svg>
 <svg class="a" style="left:143px;top:103px" width="17" height="17"><rect x=".5" y=".5" width="15" height="15" rx="2" fill="#e8e8e8" stroke="#8a8a8a"/><text x="4" y="13.5" font-family="Liberation Sans" font-weight="bold" font-size="13" fill="#e8d21a" stroke="#333" stroke-width=".6">?</text></svg>
 <div class="a" style="left:166px;top:104px;width:1px;height:20px;background:#777"></div>
 <svg class="a" style="left:174px;top:103px" width="18" height="18"><path d="M3 3.5a3.5 3.5 0 0 1 5 3.5l8 8-1.5 1.5-8-8a3.5 3.5 0 0 1-4-5l2 2 1.5-.5.5-1.5z" fill="#e2e2e2" stroke="#8f8f8f"/></svg>
 <svg class="a" style="left:210px;top:104px" width="15" height="15"><path d="M1 7.5l5-4.5v3h5v3H6v3z" fill="#a3a3a3"/><rect x="11" y="2" width="2.5" height="12" fill="#a3a3a3"/></svg>
 <div class="a" style="left:232px;top:108px;width:7px;height:7px;border-radius:50%;background:#a3a3a3"></div>
 <svg class="a" style="left:247px;top:104px" width="15" height="15"><rect x="1" y="2" width="2.5" height="12" fill="#a3a3a3"/><path d="M14 7.5L9 3v3H4v3h5v3z" fill="#a3a3a3"/></svg>
 <svg class="a" style="left:273px;top:104px" width="16" height="15"><path d="M1 7.5L5 2h9v11H5z" fill="#a3a3a3"/><path d="M6.5 5l5 5M11.5 5l-5 5" stroke="#fff" stroke-width="1.1"/></svg>
 <div class="a" style="left:309px;top:102px;width:158px;height:21px;background:#fff;border:1px solid #a9a9a9"></div>
 <div class="a" style="left:450px;top:103px;width:16px;height:19px;background:#e4e4e4;border-left:1px solid #c9c9c9"></div>
 <svg class="a" style="left:453px;top:110px" width="10" height="6"><path d="M.5.5l4.5 4.5 4.5-4.5" fill="none" stroke="#444"/></svg>
 <div class="a" style="left:472px;top:104px;width:1px;height:20px;background:#777"></div>
 <svg class="a" style="left:480px;top:105px" width="16" height="14"><path d="M1 7l6-5v3h8v4H7v3z" fill="#d8d8d8" stroke="#555"/></svg>
 <svg class="a" style="left:503px;top:105px" width="16" height="14"><path d="M15 7L9 2v3H1v4h8v3z" fill="#d8d8d8" stroke="#555"/></svg>
 <svg class="a" style="left:527px;top:102px" width="16" height="19"><path d="M6 12l6-10 2 1-6 10z" fill="#f1c232" stroke="#a07000" stroke-width=".7"/><rect x="1" y="14.5" width="14" height="3" fill="#e0393b"/></svg>
 <svg class="a" style="left:549px;top:104px" width="16" height="16"><rect x="3" y="5" width="10" height="6" fill="#5b8fcc" stroke="#2b5b9b"/><path d="M8 1v14M6 1h4M6 15h4" stroke="#444" stroke-width="1.2"/></svg>
 <div class="a" style="left:570px;top:104px;font-size:13px;line-height:16px;color:#2f6fc2;font-weight:bold;font-style:italic">Aa</div>
 <div class="a" style="left:598px;top:104px;font-size:14px;line-height:16px;color:#2f6fc2">.*</div>
 <svg class="a" style="left:629px;top:105px" width="12" height="16"><path d="M1.5 1v12l3-3 2 4.5 2-.8-2-4.4h4z" fill="#fff" stroke="#8a8a8a"/></svg>
 <div class="a" style="left:651px;top:104px;width:1px;height:20px;background:#777"></div>
 <div class="a" style="left:661px;top:108px;width:15px;height:9px;border:1px solid #9a9a9a"></div>
 <div class="a" style="left:683px;top:104px;width:1px;height:20px;background:#777"></div>
 <svg class="a" style="left:691px;top:104px" width="16" height="15"><rect x=".5" y=".5" width="14" height="12" fill="#bdbdbd" stroke="#9a9a9a"/><path d="M.5.5l7 7 7-7" fill="#fff" stroke="#9a9a9a"/></svg>
 <svg class="a" style="left:714px;top:104px" width="16" height="15"><rect x=".5" y=".5" width="14" height="12" fill="#fff" stroke="#9a9a9a"/><path d="M8 .5h6.5v12H3z" fill="#bdbdbd"/><path d="M3 12.5L10 1M5 6h5M4 9h5" stroke="#9a9a9a" fill="none"/></svg>
 <div class="a" style="left:737px;top:104px;width:1px;height:20px;background:#777"></div>
 <svg class="a" style="left:745px;top:106px" width="17" height="11"><rect x=".5" y=".5" width="16" height="9" fill="#fff" stroke="#9a9a9a"/><rect x="4" y="3" width="12.5" height="6.5" fill="#9a9a9a"/></svg>
 <svg class="a" style="left:768px;top:106px" width="17" height="11"><rect x=".5" y=".5" width="16" height="9" fill="#9a9a9a" stroke="#9a9a9a"/><rect x="1" y="1" width="4" height="6" fill="#fff"/><rect x="1" y="7" width="15" height="2.5" fill="#fff"/></svg>
 <div class="a" style="left:790px;top:106px;width:6px;height:10px;border:1px solid #9a9a9a;background:#fff"></div>
 <div class="a" style="left:0;top:123px;width:794px;height:1px;background:#9c9c9c"></div>
 <!-- management panel -->
 <div class="a" style="left:0;top:124px;width:794px;height:774px;background:#d9d9d9"></div>
 <div class="a" style="left:0;top:124px;width:201px;height:19px;background:linear-gradient(#d2d2d2,#c9c9c9);border-top:1px solid #a5a5a5"></div>
 <div class="a" style="left:3px;top:127px;font-size:10.8px;line-height:14px;color:#000">Management</div>
 <svg class="a" style="left:186px;top:129px" width="11" height="11"><path d="M1 1l9 9M10 1l-9 9" stroke="#000" stroke-width="1.5"/></svg>
 <div class="a" style="left:1px;top:144px;width:200px;height:755px;border:2px solid #a9a9a9;border-top-width:1px;background:#e3e3e3"></div>
 <div class="a" style="left:3px;top:145px;width:196px;height:23px;background:linear-gradient(#d9d9d9,#ececec)"></div>
 <div class="a" style="left:4px;top:149px;width:16px;height:19px;background:linear-gradient(#e6e6e6,#f2f2f2);border:1px solid #c5c5c5;border-bottom:none"></div>
 <svg class="a" style="left:8px;top:153px" width="7" height="11"><path d="M6 .5v10L.5 5.5z" fill="#8a8a8a"/></svg>
 <div class="a" style="left:21px;top:149px;width:62px;height:20px;background:linear-gradient(#fdfdfd,#efefef);border:1px solid #b9b9b9;border-bottom:none;border-radius:3px 3px 0 0"></div>
 <div class="a" style="left:28px;top:151px;font-size:12px;line-height:16px;font-weight:bold;color:#000">Projects</div>
 <div class="a" style="left:84px;top:151px;width:63px;height:17px;background:linear-gradient(#ececec,#dedede);border:1px solid #c5c5c5;border-bottom:none;border-radius:3px 3px 0 0"></div>
 <div class="a" style="left:90px;top:151px;font-size:11.5px;line-height:16px;color:#000">Symbols</div>
 <div class="a" style="left:148px;top:151px;width:33px;height:17px;background:linear-gradient(#ececec,#dedede);border:1px solid #c5c5c5;border-bottom:none"></div>
 <div class="a" style="left:154px;top:151px;font-size:11.5px;line-height:16px;color:#000">Files</div>
 <svg class="a" style="left:187px;top:154px" width="7" height="10"><path d="M.5 .5v9L6 5z" fill="#000"/></svg>
 <div class="a" style="left:3px;top:168px;width:196px;height:2px;background:#b8b8b8"></div>
 <div class="a" style="left:3px;top:170px;width:196px;height:725px;background:#fff;border:1px solid #d0d0d0;border-top:none"></div>
 <!-- tree -->
 <svg class="a" style="left:6px;top:172px" width="17" height="17"><circle cx="8.5" cy="8.5" r="7.5" fill="#2f7ce0" stroke="#1a3f9a"/><circle cx="8.5" cy="6.5" r="5" fill="#6eaaf0" opacity=".6"/><path d="M4 9l4.5-4 4.5 4h-1.5v4h-2v-2.5h-2V13h-2V9z" fill="#fff"/></svg>
 <div class="a" style="left:28px;top:172px;font-size:12px;line-height:17px;color:#000">Workspace</div>
 <div class="a" style="left:14px;top:189px;width:1px;height:5px;border-left:1px dotted #777"></div>
 <div class="a" style="left:10px;top:194px;width:9px;height:9px;border:1px solid #8c8c8c;background:linear-gradient(#fff,#e6e6e6)"></div>
 <div class="a" style="left:12px;top:198px;width:5px;height:1px;background:#2a3e7a"></div>
 <div class="a" style="left:20px;top:198px;width:6px;height:1px;border-top:1px dotted #777"></div>
 <svg class="a" style="left:26px;top:190px" width="16" height="16"><rect x="0" y="0" width="8" height="8" fill="#f00"/><rect x="8" y="0" width="8" height="8" fill="#0c0"/><rect x="0" y="8" width="8" height="8" fill="#ee0"/><rect x="8" y="8" width="8" height="8" fill="#00f"/><path d="M8 0v16M0 8h16" stroke="#333" stroke-width=".6"/></svg>
 <div class="a" style="left:47px;top:189px;font-size:12.5px;line-height:17px;font-weight:bold;color:#000">ff</div>
 <div class="a" style="left:33px;top:206px;width:1px;height:6px;border-left:1px dotted #777"></div>
 <div class="a" style="left:29px;top:212px;width:9px;height:9px;border:1px solid #8c8c8c;background:linear-gradient(#fff,#e6e6e6)"></div>
 <div class="a" style="left:31px;top:216px;width:5px;height:1px;background:#2a3e7a"></div>
 <div class="a" style="left:33px;top:214px;width:1px;height:5px;background:#2a3e7a"></div>
 <div class="a" style="left:39px;top:216px;width:5px;height:1px;border-top:1px dotted #777"></div>
 <svg class="a" style="left:44px;top:208px" width="17" height="15"><path d="M1 2h5l1.5 1.5H14V13H1z" fill="#5a9be0" stroke="#1f5fb0"/><path d="M1 13l3-7h12l-3 7z" fill="#8fc2f5" stroke="#1f5fb0"/></svg>
 <div class="a" style="left:66px;top:207px;font-size:12px;line-height:17px;color:#000">Sources</div>
 <!-- splitter -->
 <div class="a" style="left:201px;top:124px;width:3px;height:774px;background:#e9e9e9"></div>
 <div class="a" style="left:204px;top:124px;width:3px;height:774px;background:#d5d5d5"></div>
 <!-- editor notebook -->
 <div class="a" style="left:207px;top:127px;width:587px;height:593px;background:linear-gradient(#dadada,#ececec 30px,#dcdcdc 31px);border-top:1px solid #9f9f9f;border-left:1px solid #b0b0b0"></div>
 <div class="a" style="left:216px;top:132px;width:86px;height:19px;background:linear-gradient(#fefefe,#f0f0f0);border:1px solid #b4b4b4;border-bottom:none;border-radius:4px 4px 0 0"></div>
 <div class="a" style="left:223px;top:134px;font-size:12px;line-height:16px;font-weight:bold;color:#000">main.cpp</div>
 <svg class="a" style="left:287px;top:136px" width="10" height="10"><path d="M1 1l8 8M9 1l-8 8" stroke="#777" stroke-width="1.2"/></svg>
 <div class="a" style="left:207px;top:151px;width:587px;height:4px;background:#e9e9e9;border-top:1px solid #b0b0b0"></div>
 <div class="a" style="left:209px;top:154px;width:581px;height:564px;border:2px solid #9f9f9f;border-right:2px solid #b9b9b9;background:#fff"></div>
 <!-- editor content -->
 <div class="a" style="left:211px;top:155px;width:70px;height:548px;background:#f0f0f0"></div>
 <div class="a hatch" style="left:281px;top:155px;width:21px;height:548px"></div>
 <div class="a" style="left:282px;top:292px;width:4px;height:34px;background:#22cc2c"></div>
 <div class="a" style="left:282px;top:343px;width:4px;height:85px;background:#22cc2c"></div>
 <pre class="a ln" style="left:211px;top:157px;width:52px">1
2
3
4
5
6
7
8
9
10
11
12
13
14
15
16
17
18
19
20
21
22
23
24
25
26
27
28
29
30
31</pre>
 <!-- fold markers -->
 <div class="a fb" style="left:289px;top:261px"></div><div class="a" style="left:294px;top:271px;width:1px;height:192px;background:#808080"></div><div class="a" style="left:294px;top:463px;width:7px;height:1px;background:#808080"></div>
 <div class="a fb" style="left:289px;top:482px"></div><div class="a" style="left:294px;top:492px;width:1px;height:69px;background:#808080"></div><div class="a" style="left:294px;top:561px;width:7px;height:1px;background:#808080"></div>
 <div class="a fb" style="left:289px;top:584px"></div><div class="a" style="left:294px;top:594px;width:1px;height:86px;background:#808080"></div><div class="a" style="left:294px;top:680px;width:7px;height:1px;background:#808080"></div>
 <pre class="a code" style="left:303px;top:157px;width:485px;overflow:hidden"><span class="pp">#include &lt;iostream&gt;</span>

<span class="kw">using</span> <span class="kw">namespace</span> <span class="k2">std</span><span class="op">;</span>
<span class="kw">float</span> mmt<span class="op">(</span><span class="kw">float</span><span class="op">,</span><span class="kw">float</span><span class="op">,</span><span class="kw">float</span><span class="op">&amp;,</span><span class="kw">float</span><span class="op">&amp;);</span>
<span class="kw">float</span> mms<span class="op">(</span><span class="kw">float</span><span class="op">,</span><span class="kw">float</span><span class="op">,</span><span class="kw">float</span><span class="op">,</span><span class="kw">float</span><span class="op">,</span><span class="kw">float</span><span class="op">,</span><span class="kw">float</span><span class="op">&amp;,</span><span class="kw">float</span><span class="op">&amp;);</span>
<span class="kw">int</span> main<span class="op">()</span>
<span class="br">{</span>
    <span class="kw">float</span> sh<span class="op">,</span>gh<span class="op">,</span>hight<span class="op">,</span>rule<span class="op">,</span>z1<span class="op">,</span>z2<span class="op">,</span>z3<span class="op">,</span>br<span class="op">,</span>br1<span class="op">,</span>br2<span class="op">,</span>br3<span class="op">;</span>
    <span class="k2">cout</span><span class="op">&lt;&lt;</span><span class="st">"Please enter the rule, height and size of the three sides of the triangle= "</span><span class="op">;</span>
    <span class="k2">cin</span><span class="op">&gt;&gt;</span>rule<span class="op">&gt;&gt;</span>hight<span class="op">&gt;&gt;</span>z1<span class="op">&gt;&gt;</span>z2<span class="op">&gt;&gt;</span>z3<span class="op">;</span>
    mms<span class="op">(</span>rule<span class="op">,</span>hight<span class="op">,</span>z1<span class="op">,</span>z2<span class="op">,</span>z3<span class="op">,</span>br2<span class="op">,</span>br3<span class="op">);</span>
    <span class="k2">cout</span><span class="op">&lt;&lt;</span><span class="st">"<u>masahat</u>:"</span><span class="op">&lt;&lt;</span><span class="st">" "</span><span class="op">&lt;&lt;</span>br2<span class="op">&lt;&lt;</span><span class="st">" "</span><span class="op">&lt;&lt;</span><span class="st">"<u>mohit</u>:"</span><span class="op">&lt;&lt;</span><span class="st">" "</span><span class="op">&lt;&lt;</span>br3<span class="op">&lt;&lt;</span><span class="k2">endl</span><span class="op">;</span>
    <span class="k2">cout</span><span class="op">&lt;&lt;</span><span class="st">"Please enter the radius and diameter of the circle:"</span><span class="op">;</span>
    <span class="k2">cin</span><span class="op">&gt;&gt;</span>sh<span class="op">&gt;&gt;</span>gh<span class="op">;</span>
    mmt<span class="op">(</span>sh<span class="op">,</span>gh<span class="op">,</span>br<span class="op">,</span>br1<span class="op">);</span>
    <span class="k2">cout</span><span class="op">&lt;&lt;</span><span class="st">"<u>masahat</u> <u>daire</u>:"</span><span class="op">&lt;&lt;</span><span class="st">" "</span><span class="op">&lt;&lt;</span>br<span class="op">&lt;&lt;</span><span class="st">" "</span><span class="op">&lt;&lt;</span><span class="st">"<u>mohit</u> <u>daire</u>:"</span><span class="op">&lt;&lt;</span><span class="st">" "</span>
    <span class="kw">return</span> <span class="nu">0</span><span class="op">;</span>
<span class="br">}</span>
<span class="kw">float</span> mmt<span class="op">(</span><span class="kw">float</span> sl<span class="op">,</span><span class="kw">float</span> gl<span class="op">,</span><span class="kw">float</span><span class="op">&amp;</span> f<span class="op">,</span><span class="kw">float</span><span class="op">&amp;</span> fl<span class="op">)</span>
<span class="op">{</span>
<span class="kw">float</span> pi<span class="op">=</span><span class="nu">3.14</span><span class="op">;</span>
f<span class="op">=</span>sl<span class="op">*</span>sl<span class="op">*</span>pi<span class="op">;</span>
fl<span class="op">=</span>gl<span class="op">*</span>pi<span class="op">;</span>
<span class="op">}</span>
<span class="kw">float</span> mms<span class="op">(</span><span class="kw">float</span> r<span class="op">,</span><span class="kw">float</span> h<span class="op">,</span><span class="kw">float</span> ze1<span class="op">,</span><span class="kw">float</span> ze2<span class="op">,</span><span class="kw">float</span> ze3<span class="op">,</span><span class="kw">float</span> k<span class="op">,</span><span class="kw">float</span> kh<span class="op">)</span>
<span class="op">{</span>
<span class="kw">float</span> pi<span class="op">=</span><span class="nu">3.14</span><span class="op">;</span>
k<span class="op">=</span>r<span class="op">*</span>h<span class="op">/</span><span class="nu">2</span><span class="op">;</span>
kh<span class="op">=</span>ze1<span class="op">+</span>ze2<span class="op">+</span>ze3<span class="op">;</span>
<span class="op">}</span>
</pre>
 <!-- h scrollbar -->
 <div class="a" style="left:211px;top:703px;width:577px;height:15px;background:#f0f0f0"></div>
 <div class="a" style="left:211px;top:703px;width:149px;height:15px;background:#cdcdcd"></div>
 <svg class="a" style="left:775px;top:706px" width="6" height="9"><path d="M.8.8L4.8 4.5.8 8.2" fill="none" stroke="#606060" stroke-width="1.3"/></svg>
 <!-- logs panel -->
 <div class="a" style="left:207px;top:720px;width:587px;height:9px;background:#e4e4e4;border-bottom:1px solid #cfcfcf"></div>
 <div class="a" style="left:207px;top:729px;width:585px;height:19px;background:linear-gradient(#3891e3,#0b6fd6);border-bottom:1px solid #a3c6ec"></div>
 <div class="a" style="left:206px;top:731px;font-size:12px;line-height:15px;color:#fff">Logs &amp; others</div>
 <svg class="a" style="left:777px;top:733px" width="11" height="11"><path d="M1 1l9 9M10 1l-9 9" stroke="#fff" stroke-width="1.6"/></svg>
 <div class="a" style="left:207px;top:749px;width:587px;height:144px;background:linear-gradient(#dcdcdc,#ececec 28px,#d8d8d8 29px)"></div>
 <div class="a tab2" style="left:215px;top:754px;width:135px"></div>
 <div class="a t2t" style="left:252px">Code::Blocks</div>
 <svg class="a" style="left:336px;top:759px" width="10" height="10"><path d="M1 1l8 8M9 1l-8 8" stroke="#777" stroke-width="1.2"/></svg>
 <div class="a tab2" style="left:351px;top:754px;width:134px"></div>
 <svg class="a" style="left:358px;top:756px" width="16" height="16"><circle cx="6.5" cy="6.5" r="5.5" fill="#cfe6f7" stroke="#6a8fb0"/><path d="M10.5 10.5l4.5 4.5" stroke="#c79a1a" stroke-width="3"/></svg>
 <div class="a t2t" style="left:376px">Search results</div>
 <svg class="a" style="left:471px;top:759px" width="10" height="10"><path d="M1 1l8 8M9 1l-8 8" stroke="#777" stroke-width="1.2"/></svg>
 <div class="a" style="left:486px;top:753px;width:100px;height:22px;background:linear-gradient(#fefefe,#f2f2f2);border:1px solid #b4b4b4;border-bottom:none;border-radius:3px 3px 0 0"></div>
 <svg class="a" style="left:493px;top:756px" width="16" height="16"><path d="M8 .8l1.8 1.9 2.6-.5.4 2.6 2.4 1.2-1.2 2.4 1.2 2.4-2.4 1.2-.4 2.6-2.6-.5L8 16l-1.8-1.9-2.6.5-.4-2.6-2.4-1.2 1.2-2.4L.8 6l2.4-1.2.4-2.6 2.6.5z" fill="#2a86d8"/><circle cx="8" cy="8.4" r="3" fill="#fff"/><circle cx="8" cy="8.4" r="1.5" fill="#2a86d8"/></svg>
 <div class="a t2t" style="left:512px;font-weight:bold;color:#000">Build log</div>
 <svg class="a" style="left:572px;top:759px" width="10" height="10"><path d="M1 1l8 8M9 1l-8 8" stroke="#777" stroke-width="1.2"/></svg>
 <div class="a tab2" style="left:587px;top:754px;width:140px"></div>
 <svg class="a" style="left:593px;top:756px" width="16" height="17"><path d="M3 16L6 3" stroke="#c9a15a" stroke-width="1.6"/><path d="M5 2c3-2 6 2 10 1l-2 6c-3 1-6-2-9-1z" fill="#e22b2b"/></svg>
 <div class="a t2t" style="left:612px">Build messages</div>
 <svg class="a" style="left:712px;top:759px" width="10" height="10"><path d="M1 1l8 8M9 1l-8 8" stroke="#777" stroke-width="1.2"/></svg>
 <div class="a tab2" style="left:728px;top:754px;width:46px"></div>
 <svg class="a" style="left:734px;top:756px" width="15" height="17"><rect x="1" y="3" width="12" height="13" fill="#f4f4f4" stroke="#9a9a9a"/><path d="M4 13L11 1" stroke="#e8a317" stroke-width="3"/></svg>
 <div class="a t2t" style="left:752px">Cpp</div>
 <svg class="a" style="left:778px;top:759px" width="7" height="10"><path d="M.5 .5v9L6 5z" fill="#000"/></svg>
 <div class="a" style="left:207px;top:774px;width:587px;height:3px;background:#e0e0e0;border-top:1px solid #b5b5b5"></div>
 <div class="a" style="left:207px;top:777px;width:585px;height:117px;background:#fff;border:2px solid #a5a5a5;border-right-color:#c5c5c5;border-bottom:2px solid #a3a3a3"></div>
 <pre class="a log" style="left:213px;top:809px"><b>-------------- Run: Debug in ff (compiler: GNU GCC Compiler)---------------</b></pre>
 <pre class="a log" style="left:213px;top:829px">Checking for existence: C:\Users\Alireza\Desktop\ff\bin\Debug\ff.exe
Executing: "C:\Program Files (x86)\CodeBlocks/cb_console_runner.exe" "C:\Users
\Alireza\Desktop\ff\bin\Debug\ff.exe"  (in C:\Users\Alireza\Desktop\ff\.)</pre>
 <div class="a" style="left:772px;top:779px;width:17px;height:113px;background:#f0f0f0"></div>
 <div class="a" style="left:772px;top:856px;width:17px;height:18px;background:#cdcdcd"></div>
 <svg class="a" style="left:776px;top:786px" width="10" height="6"><path d="M.8 5.2L5 1l4.2 4.2" fill="none" stroke="#606060" stroke-width="1.3"/></svg>
 <svg class="a" style="left:776px;top:880px" width="10" height="6"><path d="M.8.8L5 5l4.2-4.2" fill="none" stroke="#606060" stroke-width="1.3"/></svg>
 <!-- status bar -->
 <div class="a" style="left:207px;top:894px;width:587px;height:4px;background:#f2f2f2"></div>
 <div class="a" style="left:0;top:898px;width:794px;height:22px;background:#f0f0f0;border-top:1px solid #dadada"></div>
 <div class="a" style="left:3px;top:900px;width:111px;height:18px;background:#e1e1e1;border:1px solid #c4c4c4"></div>
 <div class="a sb" style="left:5px">C/C++</div>
 <div class="a sb" style="left:121px">Windows (CR+LF)</div>
 <div class="a" style="left:240px;top:900px;width:1px;height:19px;background:#d4d4d4"></div>
 <div class="a sb" style="left:245px">WINDOWS-1252</div>
 <div class="a" style="left:357px;top:900px;width:1px;height:19px;background:#d4d4d4"></div>
 <div class="a sb" style="left:362px">Line 7, Col 2, Pos 154</div>
 <div class="a" style="left:718px;top:900px;width:1px;height:19px;background:#d4d4d4"></div>
 <div class="a sb" style="left:724px">Read/Write</div>
</div>
<div id="con" class="a">
 <div class="a" style="left:0;top:0;width:695px;height:30px;background:#fff"></div>
 <svg class="a" style="left:8px;top:8px" width="15" height="13"><rect x=".5" y=".5" width="14" height="12" fill="#e9ecef" stroke="#9aa3ab"/><rect x="2" y="3" width="5" height="8" fill="#3f8f6a"/><rect x="2" y="3" width="5" height="3" fill="#5a9ad0"/><rect x="9" y="3" width="4" height="8" fill="#dfe3e6"/><rect x="11" y="3" width="2" height="3" fill="#8ac46a"/></svg>
 <div class="a" style="left:29px;top:6px;font-size:11.9px;line-height:16px;color:#808080">C:\Users\Alireza\Desktop\ff\bin\Debug\ff.exe</div>
 <div class="a" style="left:575px;top:14px;width:11px;height:1px;background:#8a8a8a"></div>
 <div class="a" style="left:621px;top:9px;width:10px;height:10px;border:1px solid #8a8a8a"></div>
 <svg class="a" style="left:667px;top:9px" width="11" height="11"><path d="M.5.5l10 10M10.5.5l-10 10" stroke="#8a8a8a" stroke-width="1"/></svg>
 <pre class="a cn" style="left:0;top:32px">Please enter the rule, height and size of the three sides of the triangle= 2
3
6
6
3
masahat: 3 mohit: 15
Please enter the radius and diameter of the circle:2
6
masahat daire: 12.56 mohit daire: 18.84
Process returned 0 (0x0)   execution time : 20.807 s
Press any key to continue.</pre>
 <div class="a" style="left:678px;top:30px;width:17px;height:435px;background:#f0f0f0"></div>
 <div class="a" style="left:679px;top:47px;width:15px;height:17px;background:#cdcdcd"></div>
 <svg class="a" style="left:681px;top:36px" width="10" height="6"><path d="M.8 5.2L5 1l4.2 4.2" fill="none" stroke="#606060" stroke-width="1.6"/></svg>
 <svg class="a" style="left:681px;top:453px" width="10" height="6"><path d="M.8.8L5 5l4.2-4.2" fill="none" stroke="#606060" stroke-width="1.6"/></svg>
</div>
<!-- floating button -->
<div class="a" style="left:1259px;top:887px;width:42px;height:42px;border-radius:50%;background:#0b0b0b;border:1.5px solid #34505a"></div>
<svg class="a" style="left:1271px;top:901px" width="10" height="14"><path d="M9 1.5L3 7l6 5.5" fill="none" stroke="#cfcfcf" stroke-width="2.6"/></svg>
<!-- tray popup -->
<div id="tray" class="a">
 <svg class="a" style="left:4px;top:4px" width="32" height="32" viewBox="0 0 32 32"><rect x="8.5" y="8.5" width="15" height="15" rx="2.5" fill="#2a8fe0" stroke="#6ab8f0" stroke-width=".8"/><path d="M8.5 19c3 0 4 4.5 4.5 4.5H11c-1.5 0-2.5-1-2.5-2.5z" fill="#f2a31a"/><rect x="11" y="11" width="9" height="6" fill="none" stroke="#d8f0ff" stroke-width="1"/><path d="M12 19h8M15 17v2" stroke="#d8f0ff" stroke-width="1"/><circle cx="20" cy="20" r="1.6" fill="none" stroke="#d8f0ff" stroke-width=".8"/></svg>
 <svg class="a" style="left:44px;top:4px" width="32" height="32" viewBox="0 0 32 32"><rect x="12" y="8" width="6" height="4" fill="none" stroke="#fff" stroke-width="1"/><path d="M11.5 12h7v11.5h-7z" fill="none" stroke="#fff" stroke-width="1"/><path d="M17 21l2 2 4-4" fill="none" stroke="#fff" stroke-width="1"/></svg>
 <svg class="a" style="left:84px;top:4px" width="32" height="32" viewBox="0 0 32 32"><path d="M16 8l7 2.5v5c0 4-3 7-7 8.5-4-1.5-7-4.5-7-8.5v-5z" fill="#fff" stroke="#111" stroke-width="1"/><path d="M16 8v16M9 15h14" stroke="#111" stroke-width="1"/><path d="M20 17l4.5 7.5h-9z" fill="#f2c31a"/></svg>
 <svg class="a" style="left:124px;top:4px" width="32" height="32" viewBox="0 0 32 32"><path d="M9 21a4 4 0 0 1 1-7.5 6 6 0 0 1 11-1 4.2 4.2 0 0 1 2 8.5z" fill="#9a9a9a"/><path d="M10 10l13 12" stroke="#d8d8d8" stroke-width="1.3"/></svg>
 <svg class="a" style="left:4px;top:44px" width="32" height="32" viewBox="0 0 32 32"><ellipse cx="17" cy="16" rx="5" ry="7" transform="rotate(-35 17 16)" fill="#222" stroke="#ddd" stroke-width="1"/><path d="M9 17l4 4" stroke="#ddd" stroke-width="3"/></svg>
 <svg class="a" style="left:44px;top:44px" width="32" height="32" viewBox="0 0 32 32"><rect x="9" y="11" width="15" height="11" rx="4" fill="#b9b9b9"/><path d="M9 15c4-2 10 2 15 0M9 18c5 2 10-2 15 0" stroke="#777" fill="none"/></svg>
 <svg class="a" style="left:84px;top:44px" width="32" height="32" viewBox="0 0 32 32"><rect x="8" y="8" width="16" height="16" fill="#ef443b"/><path d="M11 16l3-3 3 3-3 3zM17 13l3 3-3 3" fill="#fff"/></svg>
 <svg class="a" style="left:124px;top:44px" width="32" height="32" viewBox="0 0 32 32"><rect x="8" y="8" width="16" height="16" fill="#12bcc8"/><path d="M11 13a7 7 0 0 1 10 0M12.5 15a5 5 0 0 1 7 0" fill="none" stroke="#fff" stroke-width="1.2"/><path d="M14 17v5M18 17v5" stroke="#fff" stroke-width="1.2"/></svg>
 <svg class="a" style="left:4px;top:84px" width="32" height="32" viewBox="0 0 32 32"><rect x="9" y="9" width="11" height="11" fill="none" stroke="#fff" stroke-width="1.2"/><rect x="12" y="12" width="11" height="11" fill="#303030" stroke="#fff" stroke-width="1.2"/></svg>
 <svg class="a" style="left:44px;top:84px" width="32" height="32" viewBox="0 0 32 32"><circle cx="16" cy="16" r="7.5" fill="#fff" stroke="#2fd17a" stroke-width="1.5"/><path d="M13 20v-6h4.5a1.5 1.5 0 0 1 1.5 1.5V20" fill="none" stroke="#111" stroke-width="2"/></svg>
 <svg class="a" style="left:84px;top:84px" width="32" height="32" viewBox="0 0 32 32"><circle cx="16" cy="15" r="7" fill="#1aa0b0"/><circle cx="15.5" cy="14.5" r="4" fill="#fff"/><circle cx="20" cy="20" r="3.5" fill="#2f86d6"/></svg>
 <svg class="a" style="left:124px;top:84px" width="32" height="32" viewBox="0 0 32 32"><circle cx="16" cy="16" r="6.5" fill="#1a74d8"/><path d="M17 10c3 1 4 4 3 8-1-2-3-2-4-4z" fill="#5fd04a"/></svg>
 <svg class="a" style="left:4px;top:124px" width="32" height="32" viewBox="0 0 32 32"><rect x="8" y="8" width="16" height="16" fill="#0c0c0c"/><path d="M13 20l3-10 3 10M12 16l4 5 4-5" fill="none" stroke="#28b6f0" stroke-width="1.3"/></svg>
 <svg class="a" style="left:44px;top:124px" width="32" height="32" viewBox="0 0 32 32"><path d="M12 9l6 7-6 7 2-7z" fill="#3a7fe0"/><rect x="8" y="14" width="5" height="4" fill="#f28a1a"/><rect x="18" y="14" width="6" height="4" fill="#22c22a"/></svg>
 <svg class="a" style="left:84px;top:124px" width="32" height="32" viewBox="0 0 32 32"><circle cx="18" cy="14" r="5" fill="#6a9ad8"/><path d="M9 18c2-5 8-6 13-3l-4 7c-3-2-6-3-9-4z" fill="#e8a21a"/><path d="M10 20c3-3 8-3 12 0l-6 4z" fill="#22b03a"/></svg>
 <svg class="a" style="left:124px;top:124px" width="32" height="32" viewBox="0 0 32 32"><rect x="8" y="8" width="16" height="16" fill="#e8412a"/><path d="M21 11h-7c-2 0-2 4 0 4h4c2 0 2 4 0 4h-7" fill="none" stroke="#fff" stroke-width="2.2"/></svg>
</div>
<!-- taskbar -->
<div id="taskbar" class="a">
 <svg class="a" style="left:10px;top:8px" width="16" height="15"><path d="M0 2l6.5-1v6H0zM7.5.8L16 0v7H7.5zM0 8h6.5v6L0 13zM7.5 8H16v7l-8.5-1.2z" fill="#fff"/></svg>
 <svg class="a" style="left:45px;top:7px" width="18" height="18"><circle cx="10.5" cy="6.5" r="5" fill="none" stroke="#fff" stroke-width="1.4"/><path d="M7 10L1.5 16" stroke="#fff" stroke-width="1.6"/></svg>
 <div class="a" style="left:82px;top:8px;width:15px;height:15px;border-radius:50%;border:2px solid #fff"></div>
 <svg class="a" style="left:117px;top:8px" width="17" height="15"><path d="M1 1h10M1 14h10" stroke="#fff" stroke-width="1.4"/><rect x="2" y="4" width="8" height="7" fill="none" stroke="#fff" stroke-width="1.3"/><path d="M14 1v2M14 5v9" stroke="#fff" stroke-width="1.6"/></svg>
 <svg class="a" style="left:156px;top:7px" width="17" height="17"><path d="M16 10H5c0 4 6 5 10 3v3.5C10 18 1 17 1 9 1 2 8-1 12 1c4 2 4 6 4 9zM5 7h7c0-3-6-4-7 0z" fill="#1583e8"/></svg>
 <svg class="a" style="left:193px;top:8px" width="18" height="16"><path d="M1 1h6l2 2h8v12H1z" fill="#e8b53a"/><path d="M1 5h16v10H1z" fill="#f7d36a"/><path d="M6 15v-5h6v5" fill="none" stroke="#1f86d8" stroke-width="2.2"/></svg>
 <svg class="a" style="left:230px;top:7px" width="17" height="17"><path d="M5 4a3.5 3.5 0 0 1 7 0" fill="none" stroke="#fff" stroke-width="1.2"/><path d="M1 4h15v12H1z" fill="#fff"/><rect x="5" y="7" width="3" height="3" fill="#f25022"/><rect x="9" y="7" width="3" height="3" fill="#7fba00"/><rect x="5" y="11" width="3" height="3" fill="#00a4ef"/><rect x="9" y="11" width="3" height="3" fill="#ffb900"/></svg>
 <svg class="a" style="left:267px;top:8px" width="18" height="15"><path d="M1 5L9 0l8 5v10H1z" fill="#1b8ce8"/><path d="M1 5l8 6 8-6" fill="#72c2ff"/><path d="M1 15l8-5.5 8 5.5" fill="none" stroke="#0f6fc0" stroke-width=".8"/></svg>
 <svg class="a" style="left:305px;top:7px" width="17" height="17"><path d="M1 1.5l7-1v7.5H1.5z" fill="#d8261c"/><path d="M9 .5l7 .5v7H9z" fill="#2fae2a"/><path d="M1.5 9H8v7.5l-6 .5z" fill="#c8c21a"/><path d="M9 9h7l-.5 7.5H9z" fill="#5a2fc0"/></svg>
 <svg class="a" style="left:342px;top:7px" width="17" height="17"><path d="M3 2h12l-2 15H1z" fill="#a8d8f0" stroke="#5a9ab8" stroke-width=".8"/><path d="M4 6h9M3.5 9h9M3 12h9" stroke="#5a9ab8" stroke-width=".8"/><path d="M4 1v2M7 1v2M10 1v2M13 1v2" stroke="#666" stroke-width="1"/></svg>
 <svg class="a" style="left:379px;top:8px" width="16" height="14"><rect x=".5" y=".5" width="15" height="13" fill="#e9ecef" stroke="#9aa3ab"/><rect x="2" y="3" width="6" height="9" fill="#3f8f6a"/><rect x="2" y="3" width="6" height="3" fill="#5a9ad0"/><rect x="10" y="3" width="4" height="9" fill="#cfd5d9"/></svg>
 <div class="a" style="left:406px;top:0;width:36px;height:30px;background:#3b3b3b"></div>
 <svg class="a" style="left:415px;top:7px" width="17" height="17"><rect x="0" y="0" width="17" height="17" rx="1.5" fill="#e8412a"/><path d="M13 4H6.5c-2 0-2.2 4.2 0 4.2h4c2.2 0 2 4.3 0 4.3H4" fill="none" stroke="#fff" stroke-width="2.3"/></svg>
 <div class="a" style="left:151px;top:28px;width:28px;height:2px;background:#cdbd92"></div>
 <div class="a" style="left:188px;top:28px;width:28px;height:2px;background:#cdbd92"></div>
 <div class="a" style="left:299px;top:28px;width:27px;height:2px;background:#cdbd92"></div>
 <div class="a" style="left:336px;top:28px;width:28px;height:2px;background:#cdbd92"></div>
 <div class="a" style="left:373px;top:28px;width:28px;height:2px;background:#cdbd92"></div>
 <div class="a" style="left:406px;top:28px;width:36px;height:2px;background:#d5c598"></div>
 <svg class="a" style="left:1064px;top:11px" width="13" height="8"><path d="M.8 7L6.5 1.2 12.2 7" fill="none" stroke="#fff" stroke-width="1.2"/></svg>
 <svg class="a" style="left:1088px;top:7px" width="16" height="17"><path d="M1 15a14 14 0 0 1 14-14M4 15A11 11 0 0 1 15 4M7 15a8 8 0 0 1 8-8M10 15a5 5 0 0 1 5-5" fill="none" stroke="#888" stroke-width="1.1"/><circle cx="12.5" cy="13" r="1.8" fill="#fff"/></svg>
 <svg class="a" style="left:1109px;top:7px" width="18" height="17"><path d="M1 6h3l5-4.5v14L4 11H1z" fill="none" stroke="#fff" stroke-width="1.1"/><path d="M11.5 5.5a4 4 0 0 1 0 6M13.5 3.5a7 7 0 0 1 0 10" fill="none" stroke="#fff" stroke-width="1.1"/><path d="M15.5 1.5a10 10 0 0 1 0 14" fill="none" stroke="#999" stroke-width="1.1"/></svg>
 <div class="a" style="left:1136px;top:8px;font-size:11.6px;line-height:15px;color:#fff">ENG</div>
 <div class="a" style="left:1172px;top:8px;font-size:11.6px;line-height:15px;color:#fff">11:02 AM</div>
 <svg class="a" style="left:1238px;top:6px" width="18" height="18"><path d="M.7.7h16v11.5H11l-2.5 3-2.5-3H.7z" fill="none" stroke="#fff" stroke-width="1.2"/></svg>
 <div class="a" style="left:1275px;top:0;width:1px;height:30px;background:#6a6a6a"></div>
</div>
</body></html>
